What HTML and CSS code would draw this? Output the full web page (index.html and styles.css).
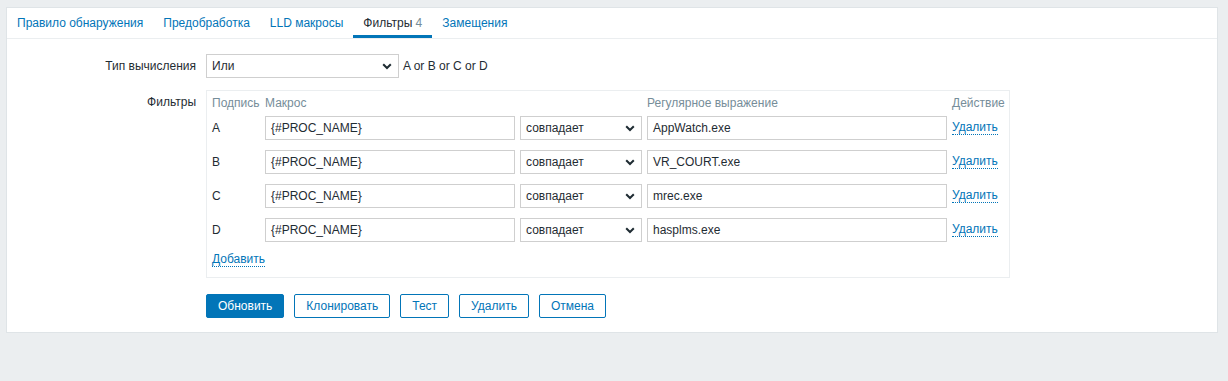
FILE: index.html
```html
<!DOCTYPE html>
<html lang="ru">
<head>
<meta charset="utf-8">
<title>Фильтры</title>
<link rel="stylesheet" href="styles.css">
</head>
<body>
<div class="panel">
  <ul class="tabs">
    <li class="tab"><a href="#">Правило обнаружения</a></li>
    <li class="tab"><a href="#">Предобработка</a></li>
    <li class="tab"><a href="#">LLD макросы</a></li>
    <li class="tab active"><a href="#">Фильтры <span class="count">4</span></a></li>
    <li class="tab"><a href="#">Замещения</a></li>
  </ul>
  <div class="form">
    <div class="label">Тип вычисления</div>
    <div class="field inline">
      <div class="select wide"><span>Или</span><svg class="chev" width="10" height="7" viewBox="0 0 10 7"><path d="M1.2 1.2 L5 5 L8.8 1.2" fill="none" stroke="#1f2c33" stroke-width="2"/></svg></div>
      <span class="expr">A or B or C or D</span>
    </div>

    <div class="label">Фильтры</div>
    <div class="field">
      <div class="ftable">
        <div class="th">Подпись</div>
        <div class="th">Макрос</div>
        <div class="th"></div>
        <div class="th">Регулярное выражение</div>
        <div class="th">Действие</div>

        <div class="td">A</div>
        <div class="td"><div class="input">{#PROC_NAME}</div></div>
        <div class="td"><div class="select"><span>совпадает</span><svg class="chev" width="10" height="7" viewBox="0 0 10 7"><path d="M1.2 1.2 L5 5 L8.8 1.2" fill="none" stroke="#1f2c33" stroke-width="2"/></svg></div></div>
        <div class="td"><div class="input">AppWatch.exe</div></div>
        <div class="td"><a class="dlink" href="#">Удалить</a></div>

        <div class="td">B</div>
        <div class="td"><div class="input">{#PROC_NAME}</div></div>
        <div class="td"><div class="select"><span>совпадает</span><svg class="chev" width="10" height="7" viewBox="0 0 10 7"><path d="M1.2 1.2 L5 5 L8.8 1.2" fill="none" stroke="#1f2c33" stroke-width="2"/></svg></div></div>
        <div class="td"><div class="input">VR_COURT.exe</div></div>
        <div class="td"><a class="dlink" href="#">Удалить</a></div>

        <div class="td">C</div>
        <div class="td"><div class="input">{#PROC_NAME}</div></div>
        <div class="td"><div class="select"><span>совпадает</span><svg class="chev" width="10" height="7" viewBox="0 0 10 7"><path d="M1.2 1.2 L5 5 L8.8 1.2" fill="none" stroke="#1f2c33" stroke-width="2"/></svg></div></div>
        <div class="td"><div class="input">mrec.exe</div></div>
        <div class="td"><a class="dlink" href="#">Удалить</a></div>

        <div class="td">D</div>
        <div class="td"><div class="input">{#PROC_NAME}</div></div>
        <div class="td"><div class="select"><span>совпадает</span><svg class="chev" width="10" height="7" viewBox="0 0 10 7"><path d="M1.2 1.2 L5 5 L8.8 1.2" fill="none" stroke="#1f2c33" stroke-width="2"/></svg></div></div>
        <div class="td"><div class="input">hasplms.exe</div></div>
        <div class="td"><a class="dlink" href="#">Удалить</a></div>

        <div class="addrow"><a class="dlink" href="#">Добавить</a></div>
      </div>
    </div>

    <div class="label"></div>
    <div class="field buttons">
      <button class="btn primary">Обновить</button>
      <button class="btn">Клонировать</button>
      <button class="btn">Тест</button>
      <button class="btn">Удалить</button>
      <button class="btn">Отмена</button>
    </div>
  </div>
</div>
</body>
</html>
```

FILE: styles.css
```css
html, body {
  margin: 0;
  padding: 0;
}
body {
  background: #ebeef0;
  font-family: "Liberation Sans", Arial, sans-serif;
  font-size: 12px;
  color: #1f2c33;
  height: 381px;
  overflow: hidden;
}
a {
  color: #0275b8;
  text-decoration: none;
}
.panel {
  margin: 7px 10px 0 6px;
  background: #fff;
  border: 1px solid #dfe4e7;
  padding-bottom: 14px;
}
.tabs {
  list-style: none;
  margin: 0;
  padding: 0;
  display: flex;
  height: 30px;
  border-bottom: 1px solid #ebeef0;
}
.tab {
  padding: 3px 10px 0;
  display: flex;
  align-items: center;
  border-bottom: 3px solid transparent;
  box-sizing: border-box;
  height: 30px;
}
.tab.active {
  border-bottom-color: #0275b8;
}
.tab.active a {
  color: #1f2c33;
}
.count {
  color: #768d99;
}
.form {
  display: grid;
  grid-template-columns: 189px 1fr;
  column-gap: 10px;
  row-gap: 12px;
  padding-top: 15px;
}
.label {
  text-align: right;
  line-height: 24px;
}
.field.inline {
  display: flex;
  align-items: center;
  gap: 4px;
}
.select {
  box-sizing: border-box;
  height: 24px;
  border: 1px solid #cfcfcf;
  background: #fff;
  display: flex;
  align-items: center;
  justify-content: space-between;
  padding: 0 6px 0 5px;
  width: 122px;
}
.select.wide {
  width: 193px;
}
.chev {
  display: block;
  flex: none;
}
.ftable {
  width: 804px;
  box-sizing: border-box;
  border: 1px solid #ebeef0;
  padding: 0 5px 5px 5px;
  display: grid;
  grid-template-columns: 48px 250px 122px 300px auto;
  column-gap: 5px;
}
.th {
  color: #768d99;
  line-height: 14px;
  padding: 5px 0 1px;
}
.td {
  height: 34px;
  display: flex;
  align-items: center;
}
.input {
  box-sizing: border-box;
  width: 100%;
  height: 24px;
  border: 1px solid #cfcfcf;
  padding: 0 5px;
  line-height: 22px;
  background: #fff;
  white-space: nowrap;
}
.dlink {
  border-bottom: 1px dotted #0275b8;
  line-height: 13px;
  display: inline-block;
}
.addrow {
  grid-column: 1 / -1;
  padding: 5px 0 5px;
}
.buttons {
  display: flex;
  gap: 10px;
  margin-top: 4px;
}
.btn {
  font-family: "Liberation Sans", Arial, sans-serif;
  font-size: 12px;
  height: 24px;
  padding: 0 11px;
  background: #fff;
  color: #0275b8;
  border: 1px solid #0275b8;
  border-radius: 2px;
  margin: 0;
  cursor: pointer;
}
.btn.primary {
  background: #0275b8;
  color: #fff;
}
```
